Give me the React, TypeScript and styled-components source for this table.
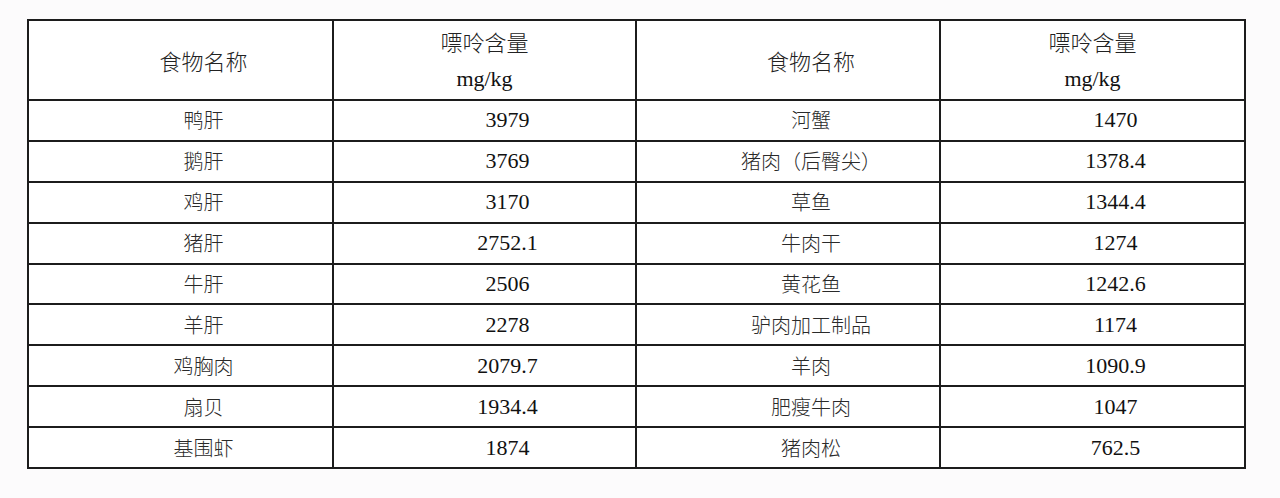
import styled, { createGlobalStyle } from 'styled-components';

const GlobalStyle = createGlobalStyle`
  html, body {
    margin: 0;
    padding: 0;
    background: #fcfbfc;
  }
`;

const Page = styled.div`
  padding: 19px 0 0 27px;
  height: 498px;
  box-sizing: border-box;
`;

const Table = styled.table`
  width: 1217px;
  table-layout: fixed;
  border-collapse: collapse;
  background: #fff;
  border: 2px solid #1c1c1c;
`;

const HeadCell = styled.th<{ $offset?: boolean }>`
  height: 78px;
  padding: 0 0 0 ${(p) => (p.$offset ? '46px' : '0')};
  border: 2px solid #1c1c1c;
  font-weight: 400;
  text-align: center;
  vertical-align: middle;
  color: #222;
`;

const Cell = styled.td<{ $kind: 'name' | 'num' }>`
  height: 38.9px;
  padding: 0 0 0 46px;
  border: 2px solid #1c1c1c;
  text-align: center;
  vertical-align: middle;
  font-family: ${(p) =>
    p.$kind === 'num'
      ? '"Liberation Serif", "Times New Roman", serif'
      : '"Noto Sans CJK SC", sans-serif'};
  font-size: ${(p) => (p.$kind === 'num' ? '22px' : '20px')};
  font-weight: ${(p) => (p.$kind === 'num' ? 400 : 300)};
  color: ${(p) => (p.$kind === 'num' ? '#111' : '#2a2a2a')};
  line-height: 1;
`;

const HeadTitle = styled.div`
  font-family: "Noto Sans CJK SC", sans-serif;
  font-weight: 300;
  font-size: 22px;
  line-height: 1;
`;

const Unit = styled.div`
  margin-top: 16px;
  font-family: "Liberation Serif", "Times New Roman", serif;
  font-size: 22px;
  line-height: 1;
  color: #111;
`;

const rows: [string, string, string, string][] = [
  ['鸭肝', '3979', '河蟹', '1470'],
  ['鹅肝', '3769', '猪肉（后臀尖）', '1378.4'],
  ['鸡肝', '3170', '草鱼', '1344.4'],
  ['猪肝', '2752.1', '牛肉干', '1274'],
  ['牛肝', '2506', '黄花鱼', '1242.6'],
  ['羊肝', '2278', '驴肉加工制品', '1174'],
  ['鸡胸肉', '2079.7', '羊肉', '1090.9'],
  ['扇贝', '1934.4', '肥瘦牛肉', '1047'],
  ['基围虾', '1874', '猪肉松', '762.5'],
];

const PurineTable = () => (
  <Table>
    <colgroup>
      <col style={{ width: 305 }} />
      <col style={{ width: 303 }} />
      <col style={{ width: 304 }} />
      <col style={{ width: 305 }} />
    </colgroup>
    <thead>
      <tr>
        <HeadCell $offset>
          <HeadTitle>食物名称</HeadTitle>
        </HeadCell>
        <HeadCell>
          <HeadTitle>嘌呤含量</HeadTitle>
          <Unit>mg/kg</Unit>
        </HeadCell>
        <HeadCell $offset>
          <HeadTitle>食物名称</HeadTitle>
        </HeadCell>
        <HeadCell>
          <HeadTitle>嘌呤含量</HeadTitle>
          <Unit>mg/kg</Unit>
        </HeadCell>
      </tr>
    </thead>
    <tbody>
      {rows.map((r) => (
        <tr key={r[0]}>
          <Cell $kind="name">{r[0]}</Cell>
          <Cell $kind="num">{r[1]}</Cell>
          <Cell $kind="name">{r[2]}</Cell>
          <Cell $kind="num">{r[3]}</Cell>
        </tr>
      ))}
    </tbody>
  </Table>
);

export default function App() {
  return (
    <>
      <GlobalStyle />
      <Page>
        <PurineTable />
      </Page>
    </>
  );
}
